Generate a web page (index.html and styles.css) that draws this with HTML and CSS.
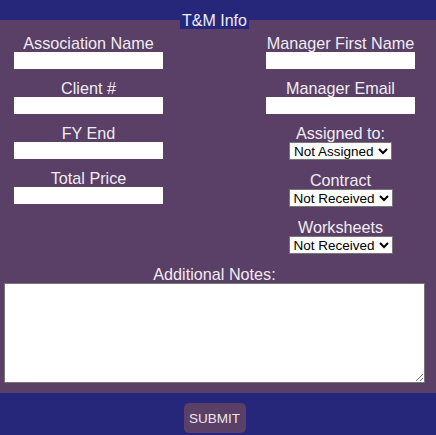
FILE: index.html
```html
<!DOCTYPE html>
<html lang="en">
<head>
<meta charset="utf-8">
<title>T&amp;M Info</title>
<link rel="stylesheet" href="styles.css">
</head>
<body>
<form class="form">
  <div class="panel">
    <div class="title">T&amp;M Info</div>
    <div class="columns">
      <div class="col">
        <label class="field"><span class="label">Association Name</span><input class="text" type="text"></label>
        <label class="field"><span class="label">Client #</span><input class="text" type="text"></label>
        <label class="field"><span class="label">FY End</span><input class="text" type="text"></label>
        <label class="field"><span class="label">Total Price</span><input class="text" type="text"></label>
      </div>
      <div class="col">
        <label class="field"><span class="label">Manager First Name</span><input class="text" type="text"></label>
        <label class="field"><span class="label">Manager Email</span><input class="text" type="text"></label>
        <label class="field field-select"><span class="label">Assigned to:</span>
          <select class="choice"><option>Not Assigned</option></select></label>
        <label class="field field-select"><span class="label">Contract</span>
          <select class="choice"><option>Not Received</option></select></label>
        <label class="field field-select"><span class="label">Worksheets</span>
          <select class="choice"><option>Not Received</option></select></label>
      </div>
    </div>
    <label class="notes"><span class="label">Additional Notes:</span><textarea class="notes-box"></textarea></label>
  </div>
  <div class="footer">
    <button class="submit" type="button">SUBMIT</button>
  </div>
</form>
</body>
</html>
```
FILE: styles.css
```css
html, body {
  margin: 0;
  background: #26277b;
}
body {
  font-family: "Liberation Sans", Arial, sans-serif;
  color: #f1ecf3;
}
.form {
  display: block;
}
.panel {
  display: flow-root;
  margin-top: 20px;
  background: #5a3f66;
  padding: 0 7px 10px 0;
}
.title {
  width: fit-content;
  margin: -8px auto 0;
  padding: 0 2px;
  background: #26277b;
  font-size: 16px;
  line-height: 17px;
}
.columns {
  display: grid;
  grid-template-columns: 149px 149px;
  justify-content: space-between;
  align-items: start;
  padding: 5px 14px 0;
}
.col {
  display: flex;
  flex-direction: column;
}
.field {
  display: flex;
  flex-direction: column;
  align-items: center;
  margin-bottom: 10px;
}
.field-select {
  margin-bottom: 11px;
}
.label {
  display: block;
  font-size: 16.2px;
  line-height: 18px;
  text-align: center;
}
.text {
  display: block;
  box-sizing: border-box;
  width: 149px;
  height: 17px;
  margin: 0;
  padding: 0 2px;
  border: 0;
  background: #fff;
  font: 13px "Liberation Sans", Arial, sans-serif;
}
.choice {
  display: block;
  box-sizing: border-box;
  height: 18px;
  margin: 0;
  border: 1px solid #767676;
  border-radius: 0;
  background: #fff;
  color: #000;
  font: 13.5px "Liberation Sans", Arial, sans-serif;
}
.notes {
  display: flex;
  flex-direction: column;
  align-items: center;
}
.notes-box {
  display: block;
  box-sizing: border-box;
  width: 421px;
  height: 100px;
  margin: 0;
  border: 1px solid #767676;
  border-radius: 0;
  background: #fff;
}
.footer {
  display: flex;
  justify-content: center;
  padding: 10px 7px 2px 0;
}
.submit {
  width: 62px;
  height: 30px;
  padding: 0;
  border: 0;
  border-radius: 5px;
  background: #5a3f66;
  color: #ece6ee;
  font: 13.5px "Liberation Sans", Arial, sans-serif;
}
```
